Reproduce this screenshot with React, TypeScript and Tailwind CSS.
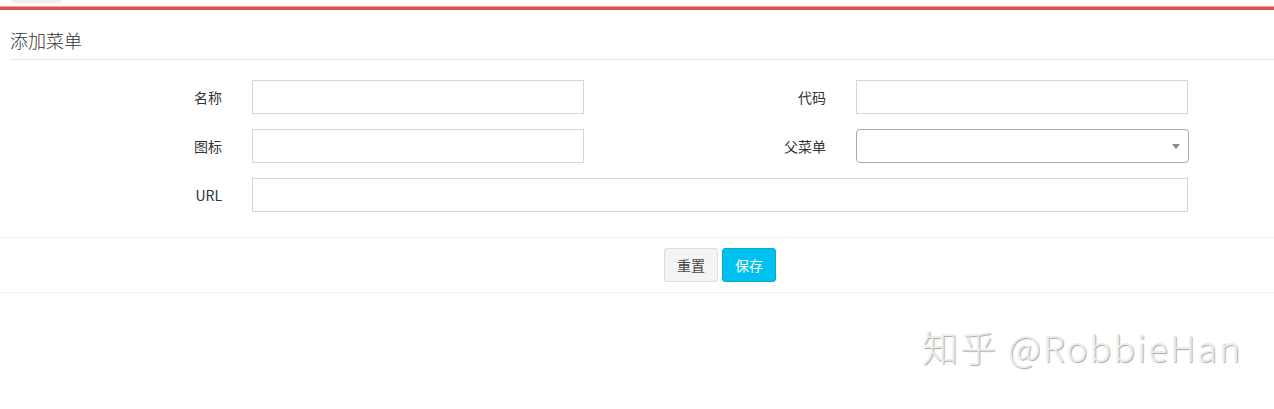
import React from 'react';

const inputCls = 'h-[34px] border border-[#d2d6de] bg-white px-3 text-sm outline-none';

function Label({ text, width }: { text: string; width: string }) {
    return <label className={`${width} shrink-0 text-right text-[14px] text-[#333]`}>{text}</label>;
}

export default function App() {
    return (
        <div className="relative h-[409px] w-[1274px] overflow-hidden bg-white font-['Noto_Sans_CJK_SC','Noto_Sans',sans-serif]">
            {/* tab stub above the box */}
            <div className="ml-[12px] h-[3px] w-[50px] rounded-b-md bg-[#eeeeee]"></div>

            <div className="mt-[3px] border-t border-[#e8a39a]">
                <div className="border-t-[3px] border-[#d9534f]">
                    <div className="ml-[10px] flex h-[50px] items-end border-b border-[#e5e5e5] pb-[10px]">
                        <h3 className="text-[18px] font-light leading-none text-[#333]">添加菜单</h3>
                    </div>

                    <form className="flex flex-col gap-[15px] pt-[20px] pb-[25px]">
                        <div className="flex items-center">
                            <Label text="名称" width="w-[222px]" />
                            <input className={`ml-[30px] w-[332px] ${inputCls}`} />
                            <Label text="代码" width="w-[242px]" />
                            <input className={`ml-[30px] w-[332px] ${inputCls}`} />
                        </div>
                        <div className="flex items-center">
                            <Label text="图标" width="w-[222px]" />
                            <input className={`ml-[30px] w-[332px] ${inputCls}`} />
                            <Label text="父菜单" width="w-[242px]" />
                            <div className="relative ml-[30px] h-[34px] w-[333px] rounded-[4px] border border-[#aaaaaa] bg-white">
                                <span className="absolute right-[8px] top-[14px] h-0 w-0 border-x-[4px] border-t-[5px] border-x-transparent border-t-[#888]"></span>
                            </div>
                        </div>
                        <div className="flex items-center">
                            <Label text="URL" width="w-[222px]" />
                            <input className={`ml-[30px] w-[936px] ${inputCls}`} />
                        </div>
                    </form>

                    <div className="flex gap-[4px] border-y border-[#f0f0f0] py-[10px] pl-[664px]">
                        <button className="h-[34px] w-[54px] rounded-[3px] border border-[#dddddd] bg-[#f4f4f4] text-[14px] text-[#444]">重置</button>
                        <button className="h-[34px] w-[54px] rounded-[3px] border border-[#00acd6] bg-[#00c0ef] text-[14px] text-white">保存</button>
                    </div>
                </div>
            </div>

            {/* watermark */}
            <div className="absolute left-[922px] top-[328px] text-[36px] font-light leading-none tracking-[2px] text-[#ededed] [text-shadow:1px_1px_1px_#a8a8a8]">
                知乎 @RobbieHan
            </div>
        </div>
    );
}
